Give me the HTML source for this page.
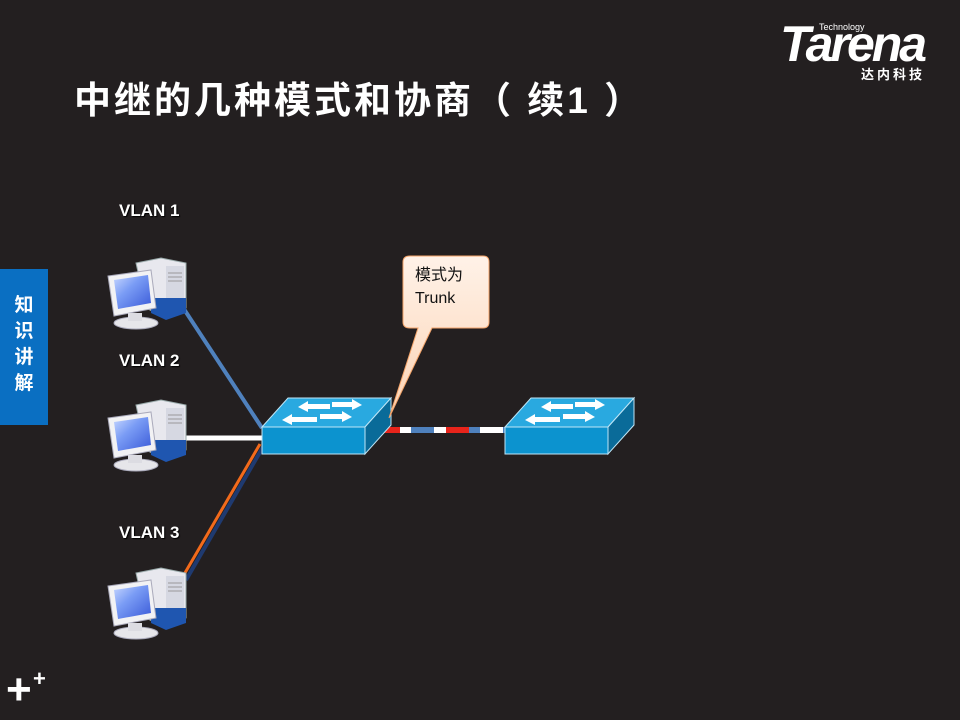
<!DOCTYPE html>
<html><head><meta charset="utf-8"><style>
html,body{margin:0;padding:0;width:960px;height:720px;background:#231f20;overflow:hidden;font-family:"Liberation Sans","Noto Sans CJK SC",sans-serif}
.t{position:absolute;left:74px;top:70px;color:#fff;font-size:37px;font-weight:bold;letter-spacing:3px;white-space:nowrap;font-family:"Liberation Sans","Noto Sans CJK SC",sans-serif}
.v{position:absolute;color:#fff;font-size:17px;font-weight:bold;text-shadow:1px 1px 1px #000}
.tab{position:absolute;left:0;top:269px;width:48px;height:156px;background:#0a6fc2;color:#fff;font-weight:bold;font-size:19px;line-height:26px;text-align:center;padding-top:24px;box-sizing:border-box}
</style></head><body>
<div class="t">中继的几种模式和协商（ 续1 ）</div>
<div class="v" style="left:119px;top:201px">VLAN 1</div>
<div class="v" style="left:119px;top:351px">VLAN 2</div>
<div class="v" style="left:119px;top:523px">VLAN 3</div>
<div class="tab">知<br>识<br>讲<br>解</div>
<div style="position:absolute;left:780px;top:22px;color:#fff;font-style:italic;font-weight:bold;font-size:50px;letter-spacing:-3px;line-height:44px">Tarena</div>
<div style="position:absolute;left:818px;top:22px;color:#fff;font-size:9px;background:#231f20;padding:0 1px">Technology</div>
<div style="position:absolute;left:861px;top:64px;color:#fff;font-size:13px;font-weight:bold;letter-spacing:3px">达内科技</div>
<div style="position:absolute;left:6px;top:668px;color:#fff;font-size:44px;font-weight:bold;line-height:44px">+</div>
<div style="position:absolute;left:33px;top:668px;color:#fff;font-size:22px;font-weight:bold;line-height:22px">+</div>
<svg width="960" height="720" style="position:absolute;left:0;top:0">
<defs>
<linearGradient id="scr" x1="0" y1="0" x2="1" y2="1"><stop offset="0" stop-color="#c8d8ff"/><stop offset="0.4" stop-color="#7a9cf5"/><stop offset="1" stop-color="#3a5ad8"/></linearGradient>
<linearGradient id="cb" x1="0" y1="0" x2="0" y2="1"><stop offset="0" stop-color="#fff2e8"/><stop offset="1" stop-color="#fbd3b4"/></linearGradient>
<g id="pc">
<polygon points="30,5 55,0 80,5 80,50 60,60 40,50" fill="#e8e8ee" stroke="#9aa" stroke-width="1"/>
<rect x="60" y="8" width="18" height="40" fill="#d6d8e2"/>
<line x1="62" y1="15" x2="76" y2="15" stroke="#999"/><line x1="62" y1="19" x2="76" y2="19" stroke="#999"/><line x1="62" y1="23" x2="76" y2="23" stroke="#999"/>
<polygon points="45,40 80,40 80,55 60,62 45,55" fill="#1f56b0"/>
<polygon points="2,18 45,12 50,50 8,58" fill="#f2f2f4" stroke="#aab" stroke-width="1"/>
<polygon points="8,22 42,17 45,45 12,51" fill="url(#scr)"/>
<ellipse cx="30" cy="65" rx="22" ry="6" fill="#e6e6ea" stroke="#aab"/>
<rect x="22" y="55" width="14" height="8" fill="#dcdce2"/>
</g>
<g id="sw">
<polygon points="0,29 26,0 129,0 103,29" fill="#29a9e0" stroke="#bfe6f7" stroke-width="1"/>
<rect x="0" y="29" width="103" height="27" fill="#0c93cf" stroke="#bfe6f7" stroke-width="1"/>
<polygon points="103,29 129,0 129,27 103,56" fill="#0a6b99" stroke="#bfe6f7" stroke-width="1"/>
<polygon points="20,22 30,16 30,19 55,19 55,24 30,24 30,27" fill="#fff"/>
<polygon points="36,9 46,3 46,6 68,6 68,11 46,11 46,14" fill="#fff"/>
<polygon points="100,7 90,1 90,4 70,4 70,9 90,9 90,12" fill="#fff"/>
<polygon points="90,19 80,13 80,16 58,16 58,21 80,21 80,24" fill="#fff"/>
</g>
</defs>
<line x1="178" y1="300" x2="262" y2="428" stroke="#4f81bd" stroke-width="4"/>
<line x1="186" y1="438" x2="262" y2="438" stroke="#fff" stroke-width="5"/>
<line x1="186" y1="580" x2="263" y2="447" stroke="#1f3a70" stroke-width="4"/>
<line x1="182" y1="578" x2="260" y2="444" stroke="#f26a1b" stroke-width="3"/>
<line x1="365" y1="430" x2="505" y2="430" stroke="#4f81bd" stroke-width="6"/>
<line x1="365" y1="430" x2="505" y2="430" stroke="#fff" stroke-width="6" stroke-dasharray="23,23" stroke-dashoffset="-23"/>
<line x1="365" y1="430" x2="505" y2="430" stroke="#e8241b" stroke-width="6" stroke-dasharray="23,46" stroke-dashoffset="-12"/>
<use href="#pc" x="106" y="258"/>
<use href="#pc" x="106" y="400"/>
<use href="#pc" x="106" y="568"/>
<use href="#sw" x="262" y="398"/>
<use href="#sw" x="505" y="398"/>
<path d="M410,256 H483 Q489,256 489,262 V322 Q489,328 483,328 H432 L389,418 L418,328 H410 Q403,328 403,322 V262 Q403,256 410,256 Z" fill="url(#cb)" stroke="#f4a46a" stroke-width="1"/>
<text x="415" y="280" font-size="16" fill="#111" font-family="Liberation Sans,Noto Sans CJK SC,sans-serif">模式为</text>
<text x="415" y="303" font-size="16" fill="#111" font-family="Liberation Sans,sans-serif">Trunk</text>
</svg>
</body></html>
